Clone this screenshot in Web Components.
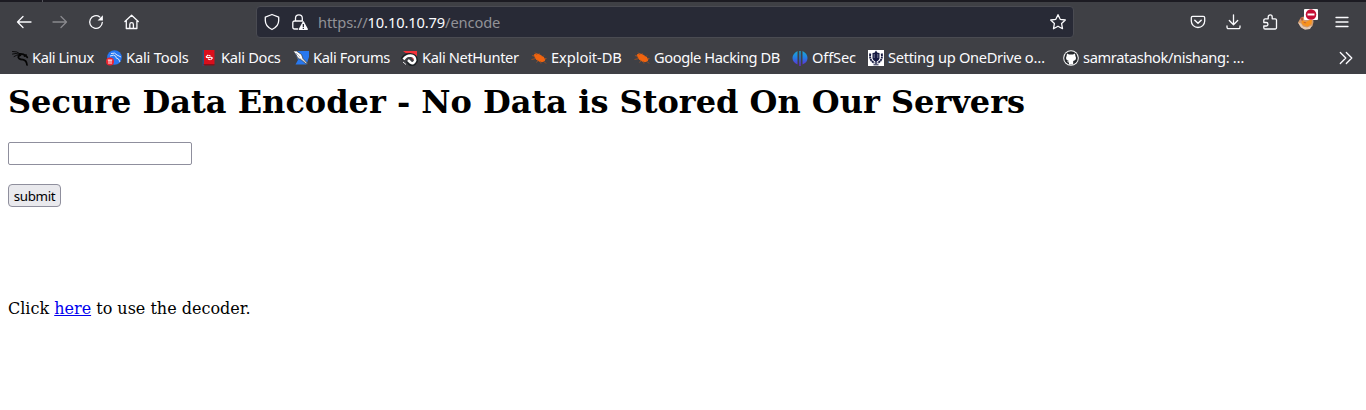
<!DOCTYPE html>
<html lang="en">
<head>
<meta charset="utf-8">
<title>Secure Data Encoder</title>
<style>
html,body{margin:0;height:100%;background:#fff;overflow:hidden}
</style>
</head>
<body>
<browser-window></browser-window>
<script>
const define=(name,html,setup)=>customElements.define(name,class extends HTMLElement{
  constructor(){super();this.attachShadow({mode:'open'}).innerHTML=html;}
  connectedCallback(){if(setup)setup(this,this.shadowRoot);}
});

const line=d=>`<g fill="none" stroke="currentColor" stroke-width="1.3" stroke-linecap="round" stroke-linejoin="round">${d}</g>`;
const bug='<path d="M3 5L5.500 3.800 9 5l4 2.800 1 2.200-2 1.600-3.500-.3L5 9z" fill="#f0640f" stroke="#f0640f" stroke-width="1" stroke-linejoin="round"/><path d="M1 5.500L4 6.500M4 2.500L6 5M8 3L8.500 5M13 5.500L11.500 7M15.500 8.500L13 8.500M.500 9.500L5 8.500M5.500 12.500L7 10.500M10 13.500L9.500 11M15 13.500L12.500 11" stroke="#a9521f" stroke-width=".8"/>';
const icons={
  back:line('<path d="M15 8H1.500M7 2.500L1.500 8 7 13.500"/>'),
  forward:line('<path d="M1 8H14.500M9 2.500L14.500 8 9 13.500"/>'),
  reload:line('<path d="M14.300 8.500A6.300 6.300 0 1 1 11.800 3"/>')+'<path d="M14.900 1.200V6.500H9.600z" fill="currentColor"/>',
  home:line('<path d="M.900 7.500L7.600 1.300l6.700 6.200M2.300 6.300V14.500H12.900V6.300M5.800 14.300V10.500a1.800 1.800 0 0 1 3.600 0V14.300"/>'),
  shield:line('<path d="M8 .500L14.700 3.200V6.500C14.700 10.500 12.500 13.400 8 15.500 3.500 13.400 1.300 10.500 1.300 6.500V3.200z"/>'),
  lock:line('<path d="M3.500 7V4.200a3.400 3.400 0 0 1 6.800 0V7M5.700 15H2.500a1.700 1.700 0 0 1-1.700-1.700V8.700A1.700 1.700 0 0 1 2.500 7H10.500"/>')+'<path fill="currentColor" fill-rule="evenodd" d="M10.700 7.700c.3-.6 1-.6 1.300 0l3.800 7c.3.600 0 1.300-.7 1.300H7.600c-.7 0-1-.7-.7-1.300zM10.700 10v3h1.300v-3zM10.700 13.800v1.200h1.300v-1.200z"/>',
  star:line('<path d="M8 .700l2.200 4.600 5.100.700-3.700 3.500.9 5.200L8 12.200l-4.500 2.500.9-5.200L.7 6l5.100-.7z"/>'),
  pocket:line('<path d="M2.700 2.300H13.300A1.500 1.500 0 0 1 14.700 3.800V7A6.700 6.500 0 0 1 1.300 7V3.800A1.500 1.500 0 0 1 2.700 2.300z"/><path d="M4.800 6.200L8 9.200l3.200-3" stroke-width="1.500"/>'),
  download:line('<path d="M7.500 .800V10.500M3.300 6.500L7.500 10.700l4.200-4.200M1 12V13.300A1.300 1.300 0 0 0 2.300 14.600H12.700A1.300 1.300 0 0 0 14 13.300V12"/>'),
  puzzle:line('<path d="M1.800 8.500V6.300A1.500 1.500 0 0 1 3.300 4.800H6.200V2.900a2 2 0 0 1 4 0V4.800h3a1.300 1.300 0 0 1 1.300 1.300v7.600a1.300 1.300 0 0 1-1.300 1.300H3.100A1.300 1.300 0 0 1 1.800 13.700V12H4.200a1.750 1.750 0 0 0 0-3.500z"/>'),
  menu:line('<path d="M2 3.500H14M2 8H14M2 12.500H14"/>'),
  chevrons:line('<path d="M2.300 2.500L7.800 8l-5.500 5.500M8.300 2.500L13.800 8l-5.500 5.500"/>'),
  fox:'<path d="M2 5L4 3l5-1 6 2 .5 4-1 4-4 3H6L2 12 0 8.500z" fill="#d39a6a"/><path d="M0 8.500l3 1 2 3 4 1 5-2-2 3.500-5 .8-4-2.300z" fill="#e3c9b4"/><path d="M4 6l4 2 6-3-.5 5-4 2.500L5 11 3.500 8.500z" fill="#f8921c"/><path d="M2 4l2-1 2 2-2 2zM5 9l2-1 1.500 1.200M13 8l-2 2" fill="#b3593e"/><path d="M5 5l4-.5" stroke="#fcc267"/>',
  dragon:'<g fill="none" stroke="#050505" stroke-linecap="round"><path d="M.500 1.500Q5 1 8.500 4M.500 4Q4 2.500 8 4.500M2 6.500Q4.500 4.500 8 5" stroke-width=".9"/><path d="M7.500 4Q11 3.500 14 6L15.300 7.300M12.500 6l1.500-1" stroke-width="1.700"/><path d="M8.500 5.200Q5 6.500 7 8.500 8.500 9.700 11 9.700 14.500 10.300 15 15" stroke-width="1.700"/></g>',
  tools:'<circle cx="8.500" cy="7.500" r="7.300" fill="#2777f4"/><path d="M5 3.500Q9 2 11 5l4 2M4 6Q8 4 10 6.500q-1 1.800 2.500 2.500l1.500 3" fill="none" stroke="#dbe8fb" stroke-width="1"/><circle cx="4" cy="11.500" r="4" fill="#ec2430"/><path d="M1.800 10H6.200M3 10V14M5 10V14" stroke="#fff" stroke-width=".9"/>',
  docs:'<path d="M1.500 0H3.500V16H1.500z" fill="#29517c"/><path d="M3 0H13.500V14H3z" fill="#d90f1c"/><path d="M2.500 14H13.500V15.500H2.500z" fill="#891018"/><path d="M7 5L5.200 6.800Q5.500 8 8.300 7.500T11.300 8L9.500 10M7.500 5.200L9.500 6M7 9L9 9.700" fill="none" stroke="#fff" stroke-width="1.100"/>',
  forums:'<path d="M1 1H16V7L13.500 14.500H2.500L5 10z" fill="#2878ee"/><path d="M0 1l3.500 0 5 3.500 1.500 4 5.500 6-3.500-1.500-3.500-3-3.500-1.500-2-4z" fill="#fff" stroke="#333" stroke-width=".7"/><path d="M3 3l4 4M4 7l4 2M9 8l3 4" stroke="#8d9095" stroke-width=".6"/>',
  hunter:'<path d="M1 1H15V14L9 7z" fill="#f6323a"/><path d="M.500 9.500Q3 4.500 8 5q6 .5 6 5.500-1.500 4.500-6 3L5.500 10.500" fill="none" stroke="#1b2125" stroke-width="4"/><path d="M1.500 9.500Q4 5.500 8.500 5.500q4.700.5 4.700 5Q11.500 14.500 8.500 12.500L6 10" fill="none" stroke="#fff" stroke-width="2.500"/><path d="M1 12l3 2.500" stroke="#e7e7e8"/>',
  bug,
  offsec:'<defs><linearGradient id="g" gradientUnits="userSpaceOnUse" x1="8" y1="0" x2="8" y2="16"><stop stop-color="#17b1cf"/><stop offset=".5" stop-color="#257be3"/><stop offset="1" stop-color="#6b23d3"/></linearGradient></defs><path d="M5.500 1V14.500Q.500 12 .500 8T5.500 1zM7.300 1H8.700V16H7.300zM10.500 1Q15.500 3.500 15.500 8t-5 6.500z" fill="url(#g)"/>',
  wreath:'<path d="M0 0H16V16H0z" fill="#fff"/><g fill="none" stroke="#171b42"><path d="M2.300 3.500Q1 10.500 6.500 13M13.700 3.500Q15 10.500 9.500 13" stroke-width="1.900" stroke-dasharray="2.200 .5"/><path d="M5.500 14.800h5" stroke-width="1"/></g><path d="M8 .5l1.500 2.200L11.500 3v5.500Q11 10.500 8.700 11.500V14H7.300V11.500Q5 10.500 4.500 8.500V3l2-.3z" fill="#171b42"/><path d="M6.200 4v4M9.800 4v4" stroke="#b7bacb" stroke-width=".6"/>',
  github:'<circle cx="8" cy="8" r="7.800" fill="#f7f7f7"/><circle cx="8" cy="8" r="6.800" fill="#24272b"/><path d="M4 3.500l2 .9h4l2-.9.400 2.500q2 4-2.200 5v3.500H6V12.500Q4.600 12.500 4 11q1 .8 2 .1Q1.700 10 3.600 6z" fill="#fff"/>'
};

define('ui-icon',`<style>:host{display:block;width:16px;height:16px;flex:none}svg{display:block;width:100%;height:100%;overflow:visible}</style><svg viewBox="0 0 16 16"></svg>`,
  (el,root)=>{root.querySelector('svg').innerHTML=icons[el.getAttribute('name')];});

define('tool-button',`<style>:host{display:grid;place-items:center;width:36px;height:32px;flex:none;color:#fbfbfe}:host([disabled]){color:#89898d}</style><slot></slot>`);

define('blocked-extension',`<style>:host{display:block;position:relative;width:16px;height:16px}svg{position:absolute;left:6px;top:-5px;width:14px;height:11px}</style>
<ui-icon name="fox"></ui-icon><svg viewBox="0 0 14 11"><rect width="14" height="11" rx="1" fill="#fff"/><circle cx="7" cy="5.500" r="5.300" fill="#c50f35"/><path d="M3.500 5.500H10.500" stroke="#fff" stroke-width="2"/></svg>`);

define('address-bar',`<style>
:host{display:flex;align-items:center;box-sizing:border-box;width:818px;height:32px;padding:0 7px;border:1px solid #4a4b52;border-radius:4px;background:#282a36;color:#fbfbfe;flex:none}
ui-icon+ui-icon{margin-left:11.500px}
.url{flex:1;margin-left:10.500px;font-size:14.670px;letter-spacing:-.12px;line-height:20px;color:#929297;white-space:pre}b{font-weight:400;color:#fbfbfe}
</style><ui-icon name="shield"></ui-icon><ui-icon name="lock"></ui-icon><span class="url">https://<b>10.10.10.79</b>/encode</span><ui-icon name="star"></ui-icon>`);

define('nav-toolbar',`<style>
:host{display:flex;align-items:center;height:40px;padding:0 6px}
address-bar{margin-left:106px}.right{display:flex;margin-left:auto}
</style>
<tool-button><ui-icon name="back"></ui-icon></tool-button><tool-button disabled><ui-icon name="forward"></ui-icon></tool-button><tool-button><ui-icon name="reload"></ui-icon></tool-button><tool-button><ui-icon name="home"></ui-icon></tool-button>
<address-bar></address-bar>
<div class="right"><tool-button><ui-icon name="pocket"></ui-icon></tool-button><tool-button><ui-icon name="download"></ui-icon></tool-button><tool-button><ui-icon name="puzzle"></ui-icon></tool-button><tool-button><blocked-extension></blocked-extension></tool-button><tool-button><ui-icon name="menu"></ui-icon></tool-button></div>`);

define('bookmark-item',`<style>
:host{display:flex;align-items:center;gap:4px;box-sizing:border-box;flex:none;color:#fbfbfe;font-size:14.670px;line-height:20px;white-space:nowrap}
span{padding-bottom:2px}
</style><ui-icon></ui-icon><span><slot></slot></span>`,
  (el,root)=>{const i=root.querySelector('ui-icon'),n=document.createElement('ui-icon');n.setAttribute('name',el.getAttribute('icon'));i.replaceWith(n);el.style.width=el.getAttribute('width')+'px';el.style.letterSpacing=el.getAttribute('tracking')+'px';});

define('bookmarks-bar',`<style>:host{display:flex;align-items:center;height:32px;padding:0 12px;color:#fbfbfe}ui-icon{margin-left:auto}</style>
<bookmark-item icon="dragon" width="94" tracking="-.42">Kali Linux</bookmark-item>
<bookmark-item icon="tools" width="95" tracking="-.17">Kali Tools</bookmark-item>
<bookmark-item icon="docs" width="92" tracking="-.3">Kali Docs</bookmark-item>
<bookmark-item icon="forums" width="109" tracking="-.36">Kali Forums</bookmark-item>
<bookmark-item icon="hunter" width="129" tracking="-.38">Kali NetHunter</bookmark-item>
<bookmark-item icon="bug" width="103" tracking="-.08">Exploit-DB</bookmark-item>
<bookmark-item icon="bug" width="158" tracking="-.42">Google Hacking DB</bookmark-item>
<bookmark-item icon="offsec" width="76" tracking="-.17">OffSec</bookmark-item>
<bookmark-item icon="wreath" width="195" tracking="-.32">Setting up OneDrive o…</bookmark-item>
<bookmark-item icon="github" width="190" tracking="-.38">samratashok/nishang: …</bookmark-item>
<ui-icon name="chevrons"></ui-icon>`);

define('browser-chrome',`<style>
:host{display:block;box-sizing:border-box;height:74px;background:#3f4045;font-family:"Noto Sans",sans-serif}
.strip{height:2px;background:linear-gradient(90deg,transparent 42px,#55555b 42px,#55555b 43px,transparent 43px),#1c1b22}
</style><div class="strip"></div><nav-toolbar></nav-toolbar><bookmarks-bar></bookmarks-bar>`);

define('encoder-page',`<style>
:host{display:block;padding:9px 8px 8px;font:16px/19px "DejaVu Serif",serif;color:#000}
h1{margin:0 0 20px;font-size:32px;line-height:39px;font-weight:700;white-space:nowrap}
form{display:flex;flex-direction:column;align-items:flex-start;gap:19px;margin:0}
input{box-sizing:border-box;width:184px;height:23px;margin:0;border:1px solid #8f8f9d;border-radius:2px;background:#fff;outline:0}
button{box-sizing:border-box;width:53px;height:23px;margin:0;padding:1px 0 0;border:1px solid #8f8f9d;border-radius:4px;background:#e9e9ed;color:#000;font:13.333px/19px "Noto Sans",sans-serif;letter-spacing:-.35px;white-space:nowrap}
p{margin:92px 0 0}a{color:#0000ee}
</style><h1>Secure Data Encoder - No Data is Stored On Our Servers</h1>
<form onsubmit="return false"><input type="text" aria-label="Data"><button>submit</button></form>
<p>Click <a href="#">here</a> to use the decoder.</p>`);

define('browser-window',`<style>:host{display:block;height:100%;background:#fff}</style><browser-chrome></browser-chrome><encoder-page></encoder-page>`);
</script>
</body>
</html>
